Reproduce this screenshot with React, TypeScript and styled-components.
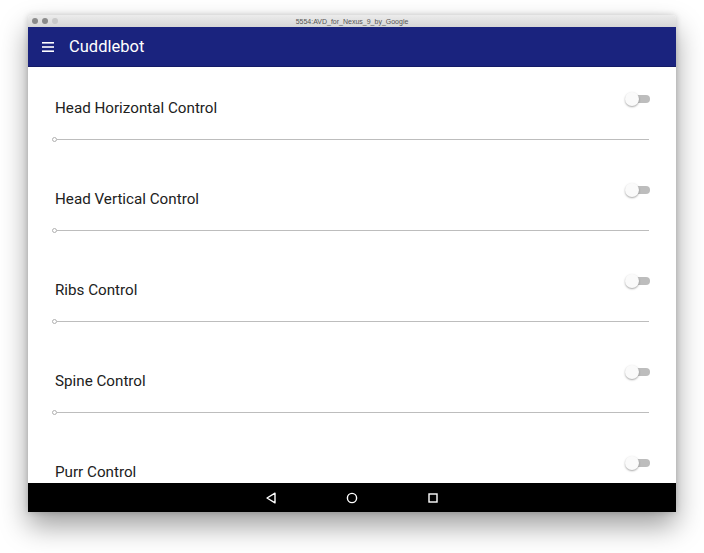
import React from "react";
import styled, { createGlobalStyle } from "styled-components";

const Global = createGlobalStyle`
  html, body { margin: 0; padding: 0; background: #ffffff; }
  body { font-family: Roboto, "Noto Sans", sans-serif; }
`;

const Page = styled.div`
  width: 704px;
  height: 553px;
  padding: 15px 0 0 28px;
  box-sizing: border-box;
  overflow: hidden;
`;

const Window = styled.div`
  width: 648px;
  display: flex;
  flex-direction: column;
  box-shadow: 0 14px 28px rgba(0, 0, 0, 0.38), 0 0 6px rgba(0, 0, 0, 0.18);
  border-radius: 4px 4px 0 0;
  overflow: hidden;
`;

const TitleBar = styled.div`
  height: 12px;
  background: linear-gradient(#ececec, #d6d6d6);
  display: flex;
  align-items: center;
  position: relative;
  padding-left: 4px;
  gap: 4px;
`;

const Light = styled.span`
  width: 6px;
  height: 6px;
  border-radius: 50%;
  background: ${(p) => p.color};
`;

const WinTitle = styled.div`
  position: absolute;
  left: 0;
  right: 0;
  top: 1px;
  line-height: 12px;
  text-align: center;
  font-family: "Liberation Sans", Arial, sans-serif;
  font-size: 7px;
  color: #555;
`;

const AppBar = styled.div`
  height: 40px;
  background: #1a237e;
  border-bottom: 1px solid #141b66;
  box-sizing: border-box;
  display: flex;
  align-items: center;
  padding-left: 14px;
  gap: 15px;
`;

const AppTitle = styled.div`
  color: #ffffff;
  font-size: 16.5px;
  font-weight: 400;
`;

const Content = styled.div`
  height: 416px;
  background: #ffffff;
  overflow: hidden;
`;

const Section = styled.div`
  height: 91px;
  box-sizing: border-box;
  padding: 25px 26px 0 24px;
`;

const Header = styled.div`
  display: flex;
  justify-content: space-between;
  align-items: flex-start;
  padding-left: 3px;
`;

const Label = styled.div`
  margin-top: 7px;
  font-size: 15.2px;
  line-height: 18px;
  color: #212121;
`;

const Switch = styled.div`
  position: relative;
  width: 25px;
  height: 14px;
`;

const Track = styled.div`
  position: absolute;
  left: 7px;
  right: 0;
  top: 3px;
  height: 8px;
  border-radius: 4px;
  background: #bdbdbd;
`;

const Thumb = styled.div`
  position: absolute;
  left: 0;
  top: 0;
  width: 14px;
  height: 14px;
  border-radius: 50%;
  background: #fafafa;
  box-shadow: 0 1px 2px rgba(0, 0, 0, 0.35);
`;

const Slider = styled.div`
  margin-top: 19px;
  height: 6px;
  display: flex;
  align-items: center;
  padding-right: 1px;
`;

const Knob = styled.div`
  width: 3px;
  height: 3px;
  border-radius: 50%;
  border: 1px solid #b0b0b0;
  flex: none;
`;

const Line = styled.div`
  flex: 1;
  height: 1px;
  background: #bdbdbd;
`;

const NavBar = styled.div`
  height: 29px;
  background: #000000;
  display: flex;
  justify-content: center;
  align-items: center;
  gap: 69px;
`;

const NavIcon = styled.svg`
  width: 12px;
  height: 12px;
`;

const controls = [
  "Head Horizontal Control",
  "Head Vertical Control",
  "Ribs Control",
  "Spine Control",
  "Purr Control",
];

export default function App() {
  return (
    <>
      <Global />
      <Page>
        <Window>
          <TitleBar>
            <Light color="#8a8a8a" />
            <Light color="#8a8a8a" />
            <Light color="#c9c9c9" />
            <WinTitle>5554:AVD_for_Nexus_9_by_Google</WinTitle>
          </TitleBar>
          <AppBar>
            <svg width="12" height="10" viewBox="0 0 12 10">
              <rect x="0" y="0" width="12" height="1.6" fill="#fff" />
              <rect x="0" y="4.2" width="12" height="1.6" fill="#fff" />
              <rect x="0" y="8.4" width="12" height="1.6" fill="#fff" />
            </svg>
            <AppTitle>Cuddlebot</AppTitle>
          </AppBar>
          <Content>
            {controls.map((c) => (
              <Section key={c}>
                <Header>
                  <Label>{c}</Label>
                  <Switch>
                    <Track />
                    <Thumb />
                  </Switch>
                </Header>
                <Slider>
                  <Knob />
                  <Line />
                </Slider>
              </Section>
            ))}
          </Content>
          <NavBar>
            <NavIcon viewBox="0 0 12 12">
              <path d="M10 1.2 L2 6 L10 10.8 Z" fill="none" stroke="#fff" strokeWidth="1.4" strokeLinejoin="round" />
            </NavIcon>
            <NavIcon viewBox="0 0 12 12">
              <circle cx="6" cy="6" r="4.6" fill="none" stroke="#fff" strokeWidth="1.4" />
            </NavIcon>
            <NavIcon viewBox="0 0 12 12">
              <rect x="2" y="2" width="8" height="8" fill="none" stroke="#fff" strokeWidth="1.4" />
            </NavIcon>
          </NavBar>
        </Window>
      </Page>
    </>
  );
}
